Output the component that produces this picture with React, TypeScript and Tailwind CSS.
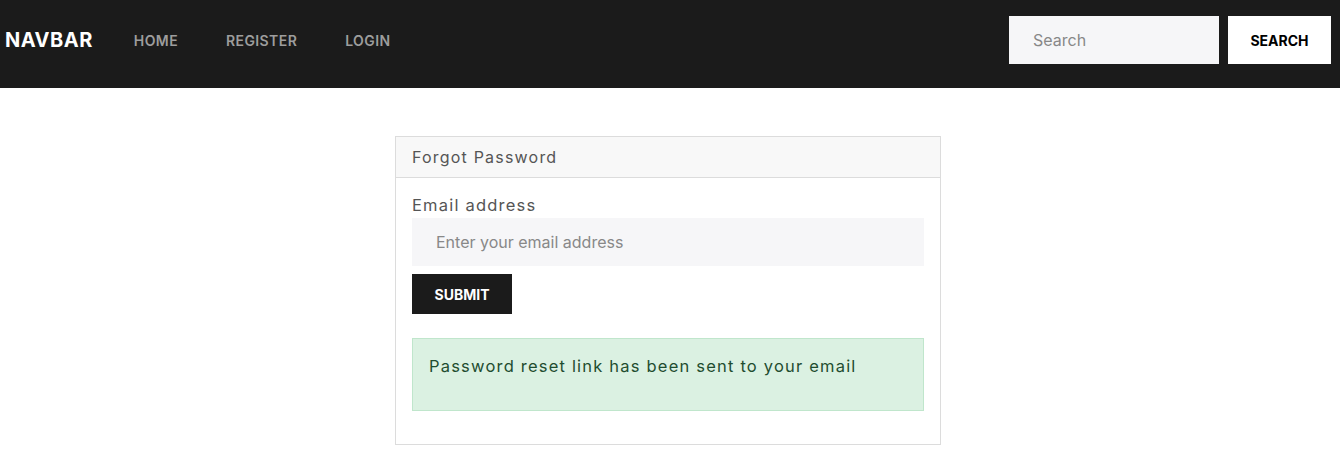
export default function App() {
    return (
        <div className="min-h-screen bg-white font-['Inter','Noto_Sans',sans-serif]">
            <nav className="h-[88px] bg-[#1b1b1b] flex items-start justify-between pl-[5px] pr-[9px] pt-[16px]">
                <div className="flex items-center h-[48px]">
                    <div className="text-white text-[20px] font-bold tracking-[0.5px] mr-[41px]">NAVBAR</div>
                    <ul className="flex items-center gap-x-[48px] text-[14px] font-semibold tracking-[0.4px] text-[#9d9d9d]">
                        <li>HOME</li>
                        <li>REGISTER</li>
                        <li>LOGIN</li>
                    </ul>
                </div>
                <div className="flex items-center gap-x-[9px]">
                    <input
                        className="w-[210px] h-[48px] bg-[#f6f6f8] px-6 text-[16px] text-[#333] placeholder:text-[#888] outline-none"
                        placeholder="Search"
                    />
                    <button className="w-[103px] h-[48px] bg-white text-black text-[14px] font-bold">SEARCH</button>
                </div>
            </nav>
            <div className="pt-[48px]">
                <div className="ml-[395px] w-[546px] border border-[#dcdcdc]">
                    <div className="h-[41px] bg-[#f8f8f8] border-b border-[#dcdcdc] flex items-center px-4 text-[16px] tracking-[1.2px] text-[#555]">
                        Forgot Password
                    </div>
                    <div className="px-4 pt-[15px] pb-[33px]">
                        <label className="block h-[24px] leading-[24px] text-[16.5px] tracking-[1.2px] text-[#555] mb-[1px]">Email address</label>
                        <input
                            className="w-full h-[48px] bg-[#f6f6f8] px-6 text-[16px] placeholder:text-[#888] outline-none"
                            placeholder="Enter your email address"
                        />
                        <button className="block mt-2 w-[100px] h-[40px] bg-[#1b1b1b] text-white text-[14px] font-bold">SUBMIT</button>
                        <div className="mt-6 h-[73px] bg-[#dbf1e2] border border-[#c0e6cc] px-4 pt-[15px] text-[16.5px] tracking-[1.2px] text-[#1f4d30]">
                            Password reset link has been sent to your email
                        </div>
                    </div>
                </div>
            </div>
        </div>
    );
}
